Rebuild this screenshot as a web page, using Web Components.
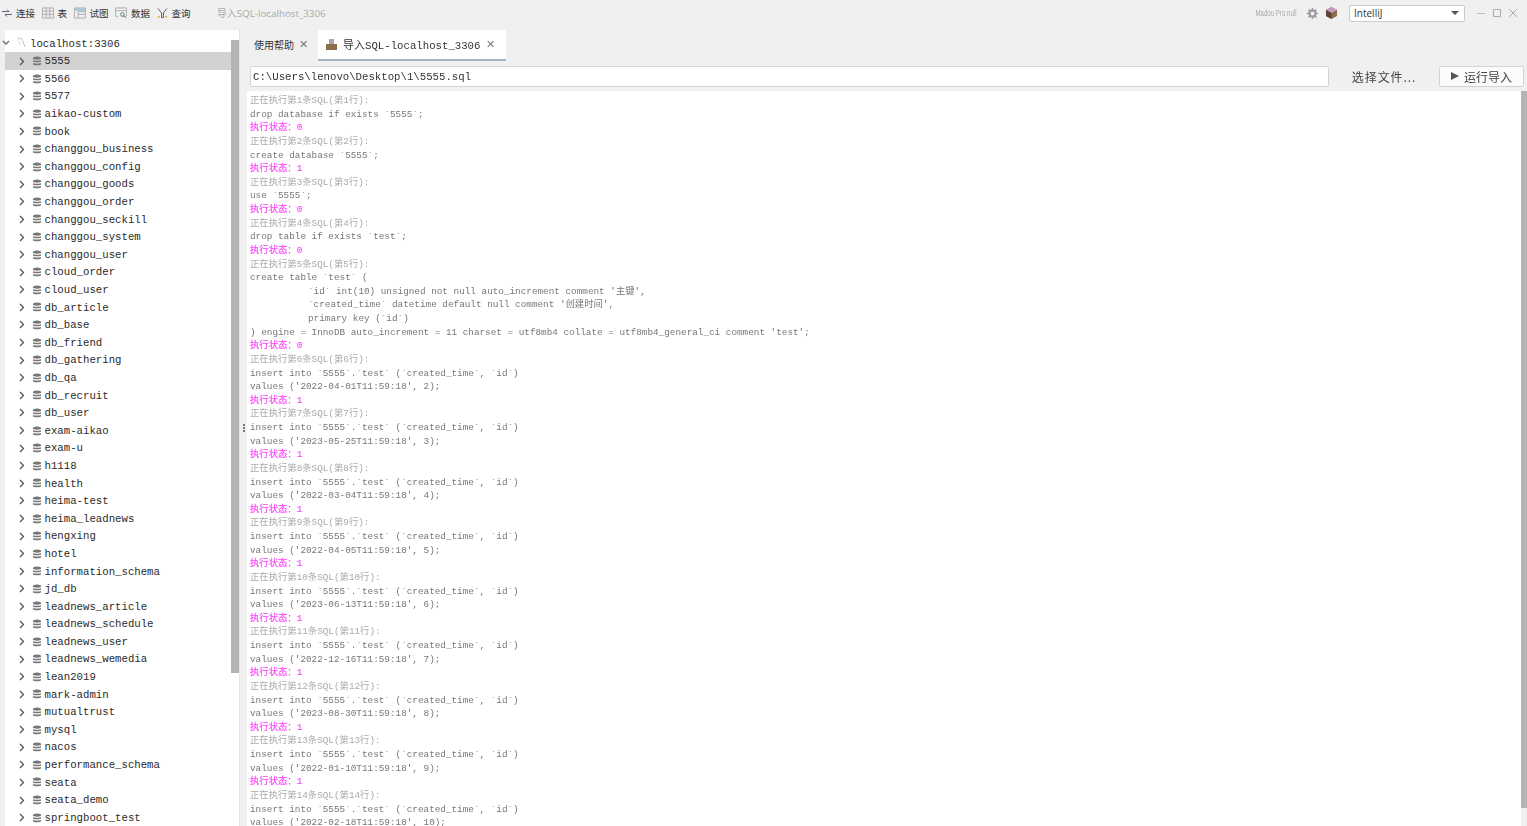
<!DOCTYPE html>
<html>
<head>
<meta charset="utf-8">
<title>SQL import</title>
<style>
html,body{margin:0;padding:0;height:100%;overflow:hidden;background:#f0f0f0}
</style>
</head>
<body>
<sql-app></sql-app>

<template id="toolbarTemplate">
<style>
:host{display:flex;align-items:center;height:30px;box-sizing:border-box;padding:0 9px 4px 2px;background:#f0f0f0;font:9.500px "Noto Sans CJK SC","Noto Sans",sans-serif;color:#333}
.tool{display:flex;align-items:center;gap:4px;margin-right:6.500px}
.tool svg{display:block}
.title{margin-left:20px;color:#aaa;font-size:9.800px}
.title span{font-family:"Open Sans",sans-serif}
.right{margin-left:auto;display:flex;align-items:center}
.user{font:9px "Liberation Sans",sans-serif;color:#aaa;transform:scaleX(.68);transform-origin:right center;white-space:nowrap}
.combo{box-sizing:border-box;width:116px;height:17px;margin:0 11px 0 12px;background:#fff;border:1px solid #ccc;border-radius:2px;display:flex;align-items:center;justify-content:space-between;padding:0 5px 0 4px;font:10px "Open Sans",sans-serif;color:#333}
.combo i{width:0;height:0;border:4px solid transparent;border-top:4px solid #555;border-bottom:0}
.win{display:flex;gap:6px;align-items:center}
</style>
<div class="tool"><svg width="10" height="10" viewBox="0 0 10 10" fill="none" stroke="#667"><path d="M0 3.500h7M5 1.500l2 2M10 6.500H3M5 8.500l-2-2"/></svg><span>连接</span></div>
<div class="tool"><svg width="12" height="12" viewBox="0 0 13 12" fill="none" stroke="#aaa"><path d="M.5.5h12v11H.5zM.5 4h12M.5 7.500h12M4.500 .5v11M8.500 .5v11"/></svg><span>表</span></div>
<div class="tool"><svg width="12" height="12" viewBox="0 0 13 12" fill="none" stroke="#aaa"><path d="M.5.5h12v11H.5zM4.500 4.500h8M4.500 7.500h8M4.500 4v7.500"/><path d="M1 1h11v2.500H1z" fill="#9fc3d8" stroke="none"/></svg><span>试图</span></div>
<div class="tool"><svg width="12" height="12" viewBox="0 0 13 12" fill="none" stroke="#aaa"><path d="M.5.5h12v9h-6M.5.5v9h3M.5 3.500h12"/><circle cx="8" cy="7.500" r="2" stroke="#5a7f8f"/><path d="M9.500 9l2 2.500" stroke="#5a7f8f"/></svg><span>数据</span></div>
<div class="tool"><svg width="11" height="12" viewBox="0 0 12 12" fill="none" stroke="#555"><path d="M1 1l4 5v5M11 1L7 6v5M5 11h2"/><circle cx="2" cy="10" r="1" fill="#c9a21e" stroke="none"/><circle cx="10" cy="10" r="1" fill="#c9a21e" stroke="none"/></svg><span>查询</span></div>
<div class="title">导入<span>SQL-localhost_3306</span></div>
<div class="right">
<span class="user">Madou Pro null</span>
<svg style="margin-left:10px" width="11" height="11" viewBox="0 0 11 11"><circle cx="5.500" cy="5.500" r="3" fill="none" stroke="#999" stroke-width="2"/><path d="M5.500 0v2M5.500 9v2M0 5.500h2M9 5.500h2M1.600 1.600l1.400 1.400M8 8l1.400 1.400M9.400 1.600L8 3M3 8L1.600 9.400" stroke="#999" stroke-width="1.500"/></svg>
<svg style="margin-left:8px" width="11" height="12" viewBox="0 0 11 12"><path d="M5.500 0L11 3v6l-5.500 3L0 9V3z" fill="#8a6a4c"/><path d="M5.500 0L11 3 5.500 6 0 3z" fill="#c79ac0"/><path d="M0 3l5.500 3v6L0 9z" fill="#5a4436"/></svg>
<div class="combo"><span>IntelliJ</span><i></i></div>
<div class="win"><svg width="10" height="10" fill="none" stroke="#bbb"><path d="M1 5.500h8"/></svg><svg width="10" height="10" fill="none" stroke="#aaa"><path d="M1.500 1.500h7v7h-7z"/></svg><svg width="10" height="10" fill="none" stroke="#aaa"><path d="M1 1l8 8M9 1L1 9"/></svg></div>
</div>
</template>

<template id="treeTemplate">
<style>
:host{display:flex;width:247px;flex:none;background:#f0f0f0;box-sizing:border-box;padding-left:5px;height:796px;overflow:hidden}
.tree{flex:none;width:226px;background:#fff;padding-top:4.700px;box-sizing:border-box;font:10.700px/17.600px "Liberation Mono",monospace;color:#2a2a2a}
.bar{flex:none;width:8px;background:#fff;padding-top:10px;box-sizing:border-box}
.bar div{height:633px;background:#b4b4b4}
.split{flex:1;display:flex;flex-direction:column;align-items:center;justify-content:center;gap:1px;background:#f0f0f0;border-left:1px solid #e4e4e4}
.split i{width:2px;height:2px;background:#777}
.root{display:flex;align-items:center;height:17.600px;margin-left:-5px;padding-left:2px}
.root svg{margin-right:7px}
.root b{font-weight:normal;padding-top:2px;margin-left:-1px}
</style>
<div class="tree"><div class="root"><svg width="8" height="8" viewBox="0 0 8 8" fill="none" stroke="#666" stroke-width="1.300"><path d="M1 2l3 3 3-3"/></svg><svg width="11" height="12" viewBox="0 0 11 12" fill="none" style="margin-right:3px"><path d="M1 1l4 1 3 8" stroke="#ccbbdd"/><path d="M1 1l2 7" stroke="#ddd"/></svg><b>localhost:3306</b></div><slot></slot></div>
<div class="bar"><div></div></div>
<div class="split"><i></i><i></i><i></i></div>
</template>

<template id="rowTemplate">
<style>
:host{display:flex;align-items:center;height:17.600px;padding-left:12.500px}
:host([selected]){background:#d2d2d2}
svg{display:block;flex:none}
.db{margin:0 3px 0 6px}
span{padding-top:2px}
</style>
<svg width="8" height="9" viewBox="0 0 8 9" fill="none" stroke="#555" stroke-width="1.300"><path d="M2 1l3.500 3.500L2 8"/></svg>
<svg class="db" width="10" height="10" viewBox="0 0 10 10" fill="#777"><path d="M1 1.500Q5 -.5 9 1.500V3Q5 4.500 1 3zM1 4.200Q5 5.500 9 4.200V5.700Q5 7 1 5.700zM1 6.900Q5 8.200 9 6.900V8.500Q5 10.200 1 8.500z"/></svg>
<span><slot></slot></span>
</template>

<template id="tabsTemplate">
<style>
:host{display:flex;height:31px;box-sizing:border-box;background:#f0f0f0;font:10px "Noto Sans CJK SC","Noto Sans",sans-serif;color:#333}
.tab{display:flex;align-items:center;box-sizing:border-box;height:31px;padding:0 7px 2px}
.first{width:71px;gap:5px}
.active{width:188px;background:#fff;border-bottom:2px solid #a5b4c0;font:10.700px "Liberation Mono","Noto Sans CJK SC",monospace;gap:6px;padding:0 0 1px 8px;white-space:pre}
.active .cjk{font:11px "Noto Sans CJK SC",sans-serif}
.x{color:#777;font:11px "Liberation Sans",sans-serif}
svg{flex:none}
</style>
<div class="tab first"><span>使用帮助</span><span class="x">✕</span></div>
<div class="tab active"><svg width="11" height="11" viewBox="0 0 11 11"><path d="M3 0h5v5H3z" fill="#a8a8a8"/><path d="M0 5h11v6H0z" fill="#8a6d4a"/></svg><span><span class="cjk">导入</span>SQL-localhost_3306</span><span class="x">✕</span></div>
</template>

<template id="fileTemplate">
<style>
:host{display:flex;align-items:center;height:30px;box-sizing:border-box;padding:0 3px 0 3px;background:#f0f0f0}
.path{flex:1;box-sizing:border-box;height:21px;background:#fff;border:1px solid #d4d4d4;border-radius:2px;padding:0 2px;font:10.700px/21px "Liberation Mono",monospace;color:#333;white-space:pre}
.pick{width:110px;text-align:center;font:12px "Noto Sans CJK SC",sans-serif;color:#444;letter-spacing:.9px}
.run{box-sizing:border-box;width:85px;height:21px;background:#fbfbfb;border:1px solid #d4d4d4;border-radius:2px;display:flex;align-items:center;justify-content:center;gap:5px;font:12px "Noto Sans CJK SC",sans-serif;color:#444}
.run i{width:0;height:0;border:4.500px solid transparent;border-left:8px solid #555;border-right:0}
</style>
<div class="path"><slot></slot></div>
<div class="pick">选择文件...</div>
<div class="run"><i></i><span>运行导入</span></div>
</template>

<template id="logTemplate">
<style>
:host{display:flex;flex:1;min-height:0;overflow:hidden;background:#fff}
.text{flex:1;padding:3px 3px 0;font:9.330px/13.620px "Liberation Mono","Noto Sans CJK SC",monospace;color:#777;white-space:pre;overflow:hidden}
.bar{flex:none;width:6px;background:#f0f0f0}
.bar div{height:717px;background:#b4b4b4}
.gray{color:#aaa}
.pink{color:#ff44ff;-webkit-text-stroke:.15px #ff44ff}
.indent{padding-left:58px}
</style>
<div class="text" id="text"></div>
<div class="bar"><div></div></div>
</template>

<template id="appTemplate">
<style>
:host{display:block;height:826px;overflow:hidden;filter:blur(.4px)}
.main{display:flex;height:796px}
.right{flex:1;min-width:0;display:flex;flex-direction:column}
</style>
<app-toolbar></app-toolbar>
<div class="main">
<db-tree id="tree"></db-tree>
<div class="right">
<import-tabs></import-tabs>
<file-bar>C:\Users\lenovo\Desktop\1\5555.sql</file-bar>
<sql-log></sql-log>
</div>
</div>
</template>

<script>
function shadowFrom(el, id){
	el.attachShadow({mode:'open'})
	el.shadowRoot.appendChild(document.getElementById(id).content.cloneNode(true))
}
class AppToolbar extends HTMLElement{ constructor(){ super(); shadowFrom(this,'toolbarTemplate') } }
class DbTree extends HTMLElement{ constructor(){ super(); shadowFrom(this,'treeTemplate') } }
class DbRow extends HTMLElement{ constructor(){ super(); shadowFrom(this,'rowTemplate') } }
class ImportTabs extends HTMLElement{ constructor(){ super(); shadowFrom(this,'tabsTemplate') } }
class FileBar extends HTMLElement{ constructor(){ super(); shadowFrom(this,'fileTemplate') } }

const inserts = [
	['2022-04-01',2],['2023-05-25',3],['2022-03-04',4],['2022-04-05',5],['2023-06-13',6],
	['2022-12-16',7],['2023-08-30',8],['2022-01-10',9],['2022-02-18',10]
]
class SqlLog extends HTMLElement{
	constructor(){ super(); shadowFrom(this,'logTemplate') }
	connectedCallback(){
		const box = this.shadowRoot.querySelector('#text')
		const add = (txt,cls)=>{
			const d = document.createElement('div')
			d.textContent = txt
			if(cls) d.className = cls
			box.appendChild(d)
		}
		const step = (n,lines,status)=>{
			add('正在执行第'+n+'条SQL(第'+n+'行):','gray')
			lines.forEach(l=>{
				if(l[0]==' ') add(l.trim(),'indent')
				else add(l)
			})
			add('执行状态：'+status,'pink')
		}
		step(1,['drop database if exists `5555`;'],0)
		step(2,['create database `5555`;'],1)
		step(3,['use `5555`;'],0)
		step(4,['drop table if exists `test`;'],0)
		step(5,[
			'create table `test` (',
			'  `id` int(10) unsigned not null auto_increment comment \'主键\',',
			'  `created_time` datetime default null comment \'创建时间\',',
			'  primary key (`id`)',
			') engine = InnoDB auto_increment = 11 charset = utf8mb4 collate = utf8mb4_general_ci comment \'test\';'
		],0)
		inserts.forEach((r,i)=>{
			step(i+6,[
				'insert into `5555`.`test` (`created_time`, `id`)',
				'values (\''+r[0]+'T11:59:18\', '+r[1]+');'
			],1)
		})
	}
}
class SqlApp extends HTMLElement{
	constructor(){ super(); shadowFrom(this,'appTemplate') }
	connectedCallback(){
		const tree = this.shadowRoot.querySelector('#tree')
		const names = ['5555','5566','5577','aikao-custom','book','changgou_business','changgou_config','changgou_goods','changgou_order','changgou_seckill','changgou_system','changgou_user','cloud_order','cloud_user','db_article','db_base','db_friend','db_gathering','db_qa','db_recruit','db_user','exam-aikao','exam-u','h1118','health','heima-test','heima_leadnews','hengxing','hotel','information_schema','jd_db','leadnews_article','leadnews_schedule','leadnews_user','leadnews_wemedia','lean2019','mark-admin','mutualtrust','mysql','nacos','performance_schema','seata','seata_demo','springboot_test']
		names.forEach((n,i)=>{
			const r = document.createElement('db-row')
			r.textContent = n
			if(i==0) r.setAttribute('selected','')
			tree.appendChild(r)
		})
	}
}
customElements.define('app-toolbar',AppToolbar)
customElements.define('db-tree',DbTree)
customElements.define('db-row',DbRow)
customElements.define('import-tabs',ImportTabs)
customElements.define('file-bar',FileBar)
customElements.define('sql-log',SqlLog)
customElements.define('sql-app',SqlApp)
</script>
</body>
</html>
